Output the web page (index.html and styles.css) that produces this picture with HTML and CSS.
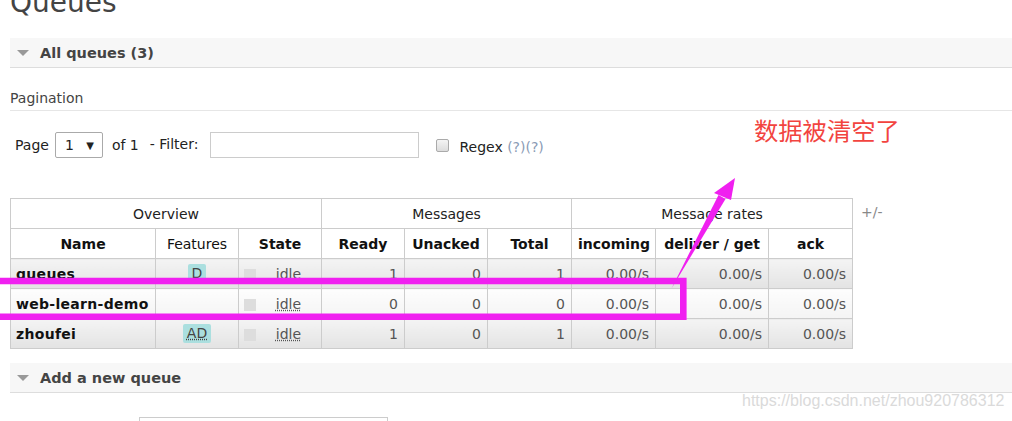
FILE: index.html
```html
<!DOCTYPE html>
<html>
<head>
<meta charset="utf-8">
<link rel="stylesheet" href="styles.css">
</head>
<body>
<div class="page">
  <h1 class="title">Queues</h1>

  <div class="section-head"><span class="tri"></span>All queues (3)</div>

  <div class="pagination-label">Pagination</div>

  <div class="pager">
    <span class="lbl">Page</span>
    <span class="select">1 <span class="caret">▼</span></span>
    <span class="lbl of">of 1</span>
    <span class="lbl filter">- Filter:</span>
    <span class="input"></span>
    <span class="check"></span>
    <span class="lbl regex">Regex <span class="help">(?)(?)</span></span>
  </div>

  <div class="table-row">
    <table class="list">
      <colgroup>
        <col style="width:145px"><col style="width:83px"><col style="width:83px">
        <col style="width:83px"><col style="width:83px"><col style="width:84px">
        <col style="width:84px"><col style="width:113px"><col style="width:84px">
      </colgroup>
      <thead>
        <tr class="group">
          <th colspan="3">Overview</th>
          <th colspan="3">Messages</th>
          <th colspan="3">Message rates</th>
        </tr>
        <tr class="cols">
          <th>Name</th><th class="normal">Features</th><th>State</th>
          <th>Ready</th><th>Unacked</th><th>Total</th>
          <th>incoming</th><th>deliver / get</th><th>ack</th>
        </tr>
      </thead>
      <tbody>
        <tr class="alt1">
          <td class="name">queues</td>
          <td class="feat"><abbr class="badge">D</abbr></td>
          <td class="state"><span class="sq"></span><abbr>idle</abbr></td>
          <td class="num">1</td><td class="num">0</td><td class="num">1</td>
          <td class="num">0.00/s</td><td class="num">0.00/s</td><td class="num">0.00/s</td>
        </tr>
        <tr class="alt2">
          <td class="name">web-learn-demo</td>
          <td class="feat"></td>
          <td class="state"><span class="sq"></span><abbr>idle</abbr></td>
          <td class="num">0</td><td class="num">0</td><td class="num">0</td>
          <td class="num">0.00/s</td><td class="num">0.00/s</td><td class="num">0.00/s</td>
        </tr>
        <tr class="alt1">
          <td class="name">zhoufei</td>
          <td class="feat"><abbr class="badge">AD</abbr></td>
          <td class="state"><span class="sq"></span><abbr>idle</abbr></td>
          <td class="num">1</td><td class="num">0</td><td class="num">1</td>
          <td class="num">0.00/s</td><td class="num">0.00/s</td><td class="num">0.00/s</td>
        </tr>
      </tbody>
    </table>
    <span class="plusminus">+/-</span>
  </div>

  <div class="section-head second"><span class="tri"></span>Add a new queue</div>

  <div class="new-queue"><span class="input wide"></span></div>
</div>

<div class="note">数据被清空了</div>
<div class="watermark">https://blog.csdn.net/zhou920786312</div>

<svg class="overlay" width="1012" height="421" viewBox="0 0 1012 421">
  <path d="M -10 281 H 683.3 V 316.7 H -10" fill="none" stroke="#f020f0" stroke-width="6.6"/>
  <polygon points="671.5,288.5 718.5,195 725.5,199" fill="#f020f0"/>
  <polygon points="735,178 714,193 731,200" fill="#f020f0"/>
</svg>
</body>
</html>
```

FILE: styles.css
```css
html, body {
  margin: 0;
  padding: 0;
  background: #fff;
}
body {
  font-family: "DejaVu Sans", Verdana, sans-serif;
  color: #444;
  width: 1012px;
  height: 421px;
  overflow: hidden;
  position: relative;
}
.page {
  padding-left: 10px;
  height: 421px;
  overflow: hidden;
}
.title {
  font-size: 28px;
  font-weight: normal;
  line-height: 34px;
  margin: -14px 0 0 0;
  color: #444;
}
.section-head {
  margin-top: 18px;
  height: 29px;
  background: #f7f7f7;
  border-bottom: 1px solid #ddd;
  display: flex;
  align-items: center;
  font-weight: bold;
  font-size: 14.5px;
  color: #444;
}
.section-head.second {
  margin-top: 14px;
}
.tri {
  width: 0;
  height: 0;
  border-left: 6px solid transparent;
  border-right: 6px solid transparent;
  border-top: 6px solid #999;
  margin: 1px 11px 0 7px;
}
.pagination-label {
  margin-top: 22px;
  font-size: 14px;
  line-height: 17px;
  padding-bottom: 3px;
  border-bottom: 1px solid #e6e6e6;
  color: #444;
}
.pager {
  margin-top: 21px;
  display: flex;
  align-items: center;
  height: 26px;
  font-size: 14px;
  color: #222;
}
.lbl {
  margin-left: 5px;
}
.select {
  margin-left: 6px;
  height: 24px;
  border: 1px solid #aaa;
  border-radius: 2px;
  box-sizing: content-box;
  display: flex;
  align-items: center;
  justify-content: space-between;
  padding: 0 8px 0 9px;
  width: 29px;
  font-size: 14px;
  color: #222;
}
.caret {
  font-size: 10px;
}
.of {
  margin-left: 9px;
}
.filter {
  margin-left: 11px;
  position: relative;
  top: -1px;
}
.input {
  display: inline-block;
  margin-left: 12px;
  width: 207px;
  height: 24px;
  border: 1px solid #ccc;
  background: #fff;
}
.check {
  display: inline-block;
  width: 11px;
  height: 11px;
  border: 1px solid #aaa;
  border-radius: 2px;
  background: linear-gradient(#f4f4f4, #dcdcdc);
  margin-left: 17px;
}
.regex {
  margin-left: 10px;
  position: relative;
  top: 2px;
}
.help {
  color: #8a9bb5;
}
.table-row {
  margin-top: 40px;
  display: flex;
  align-items: flex-start;
}
.list {
  border-collapse: collapse;
  table-layout: fixed;
  width: 842px;
  font-size: 14px;
}
.list th, .list td {
  border: 1px solid #ccc;
  height: 30px;
  padding: 0 6px;
  box-sizing: border-box;
  white-space: nowrap;
}
.list th {
  color: #111;
  background: #fff;
}
.list tr.group th {
  font-weight: normal;
  color: #222;
}
.list th.normal {
  font-weight: normal;
}
.list tr.alt1 td {
  background: linear-gradient(#f4f4f4, #e3e3e3);
}
.list tr.alt2 td {
  background: linear-gradient(#fdfdfd, #f4f4f4);
}
.list td.name {
  font-weight: bold;
  color: #111;
  text-align: left;
  letter-spacing: 0.3px;
  padding-left: 5px;
}
.list td.num {
  text-align: right;
  color: #555;
}
.list td.feat {
  text-align: center;
}
.badge {
  display: inline-block;
  background: #abdfdf;
  padding: 1px 4px 2px;
  border-radius: 2px;
  color: #444;
  text-decoration: underline dotted #444;
}
.list td.state {
  padding-left: 5px;
  padding-right: 20px;
  color: #555;
}
.list td.state abbr {
  float: right;
  text-decoration: underline dotted #555;
}
.sq {
  float: left;
  width: 12px;
  height: 12px;
  background: #ddd;
  margin-top: 3px;
}
.plusminus {
  margin-left: 8px;
  margin-top: 6px;
  font-size: 14px;
  color: #888;
}
.new-queue {
  margin-top: 24px;
  padding-left: 129px;
  height: 4px;
  overflow: hidden;
}
.input.wide {
  margin-left: 0;
  width: 247px;
  vertical-align: top;
}
.note {
  position: absolute;
  left: 754px;
  top: 112px;
  font-family: "Noto Sans CJK SC", sans-serif;
  font-size: 24.3px;
  color: #f2443f;
}
.watermark {
  position: absolute;
  left: 742px;
  top: 392px;
  font-family: "Liberation Sans", Arial, sans-serif;
  font-size: 16px;
  color: #dadada;
}
.overlay {
  position: absolute;
  left: 0;
  top: 0;
  pointer-events: none;
}
```
